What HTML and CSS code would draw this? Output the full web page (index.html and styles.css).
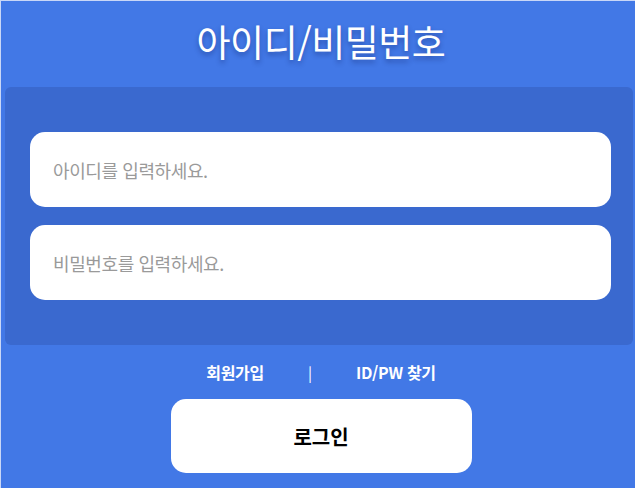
FILE: index.html
```html
<!DOCTYPE html>
<html lang="ko">
<head>
<meta charset="utf-8">
<title>로그인</title>
<link rel="stylesheet" href="styles.css">
</head>
<body>
<div class="page">
  <header class="header">
    <h1 class="title">아이디/비밀번호</h1>
  </header>
  <section class="panel">
    <div class="field"><input class="input" type="text" placeholder="아이디를 입력하세요."></div>
    <div class="field"><input class="input" type="password" placeholder="비밀번호를 입력하세요."></div>
  </section>
  <nav class="links">
    <a class="link" href="#">회원가입</a>
    <span class="sep">|</span>
    <a class="link" href="#">ID/PW 찾기</a>
  </nav>
  <div class="actions">
    <button class="btn" type="button">로그인</button>
  </div>
</div>
</body>
</html>
```

FILE: styles.css
```css
html, body {
  margin: 0;
  padding: 0;
  background: #4278e6;
  font-family: "Noto Sans CJK KR", "Noto Sans", sans-serif;
}
.page {
  width: 635px;
  height: 488px;
  box-sizing: border-box;
  border-top: 1px solid #c9d7f7;
  border-left: 1px solid #c9d7f7;
  overflow: hidden;
}
.header {
  height: 86px;
  padding-left: 6px;
  display: flex;
  align-items: center;
  justify-content: center;
}
.title {
  margin: 0;
  color: #ffffff;
  font-size: 37px;
  font-weight: 400;
  letter-spacing: -0.5px;
  text-shadow: 0 3px 5px rgba(20, 40, 110, 0.45);
  line-height: 1;
  padding-bottom: 6px;
}
.panel {
  margin-left: 4px;
  width: 628px;
  background: #3a69cf;
  border-radius: 6px;
  padding: 45px 0 45px 25px;
  box-sizing: border-box;
  display: flex;
  flex-direction: column;
  gap: 18px;
}
.field {
  width: 581px;
}
.input {
  display: block;
  width: 100%;
  height: 75px;
  box-sizing: border-box;
  border: none;
  border-radius: 15px;
  background: #ffffff;
  padding: 0 23px;
  font-family: "Noto Sans CJK KR", sans-serif;
  font-size: 18px;
  color: #333;
  outline: none;
}
.input::placeholder {
  color: #9a9a9a;
  letter-spacing: -0.4px;
}
.links {
  padding-left: 6px;
  margin-top: 14px;
  height: 26px;
  display: flex;
  align-items: center;
  justify-content: center;
  gap: 44px;
}
.link {
  color: #ffffff;
  text-decoration: none;
  font-size: 16px;
  font-weight: 700;
  letter-spacing: -0.3px;
}
.sep {
  color: #ffffff;
  font-size: 15px;
}
.actions {
  padding-left: 6px;
  margin-top: 14px;
  display: flex;
  justify-content: center;
}
.btn {
  width: 301px;
  height: 74px;
  border: none;
  border-radius: 15px;
  background: #ffffff;
  color: #000000;
  font-family: "Noto Sans CJK KR", sans-serif;
  font-size: 20px;
  font-weight: 700;
}
```
